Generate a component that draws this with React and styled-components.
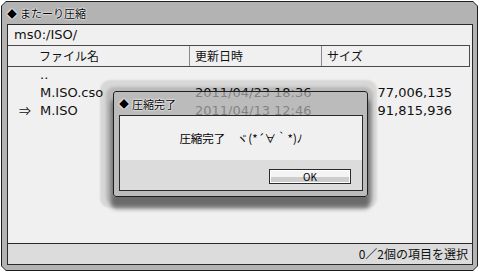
import React from 'react';
import styled, { createGlobalStyle } from 'styled-components';

const GlobalStyle = createGlobalStyle`
	html, body {
		margin: 0;
		padding: 0;
		background: #ffffff;
	}
	body {
		font-family: "DejaVu Sans", "Noto Sans CJK JP", sans-serif;
		color: #111;
	}
`;

const files = [
	{ id: 'up', name: '..', date: '', size: '' },
	{ id: 'cso', name: 'M.ISO.cso', date: '2011/04/23 18:36', size: '77,006,135' },
	{ id: 'iso', name: 'M.ISO', date: '2011/04/13 12:46', size: '91,815,936', current: true },
];

const App = () => {
	return (
		<>
			<GlobalStyle />
			<Screen>
				<FrameEdge>
					<Frame>
						<TitleBar>
							<Diamond>◆</Diamond>またーり圧縮
						</TitleBar>
						<Panel>
							<PathRow>ms0:/ISO/</PathRow>
							<HeaderRow>
								<HeadCell $w={182} $pad={31}>ファイル名</HeadCell>
								<HeadCell $w={132} $pad={5}>更新日時</HeadCell>
								<HeadCell $w={145} $pad={5} $last>サイズ</HeadCell>
							</HeaderRow>
							<List>
								{files.map((f) => (
									<Row key={f.id}>
										<NameCell>
											<Arrow>{f.current ? '⇒' : ''}</Arrow>
											{f.name}
										</NameCell>
										<DateCell>{f.date}</DateCell>
										<SizeCell>{f.size}</SizeCell>
									</Row>
								))}
							</List>
							<StatusBar>0／2個の項目を選択</StatusBar>
						</Panel>
						<Dialog>
							<DialogTitle>
								<Diamond>◆</Diamond>圧縮完了
							</DialogTitle>
							<DialogBox>
								<Message>圧縮完了　ヾ(*´∀｀*)ﾉ</Message>
								<ButtonArea>
									<OkButton>OK</OkButton>
								</ButtonArea>
							</DialogBox>
						</Dialog>
					</Frame>
				</FrameEdge>
			</Screen>
		</>
	);
};

export default App;

const Screen = styled.div`
	width: 480px;
	height: 272px;
	padding: 1px 2px 1px 1px;
	box-sizing: border-box;
	overflow: hidden;
`;

const FrameEdge = styled.div`
	width: 477px;
	height: 270px;
	padding: 1px;
	box-sizing: border-box;
	background: #1e1e1e;
	clip-path: polygon(5px 0, calc(100% - 5px) 0, 100% 5px, 100% calc(100% - 5px), calc(100% - 5px) 100%, 5px 100%, 0 calc(100% - 5px), 0 5px);
`;

const Frame = styled.div`
	position: relative;
	height: 100%;
	box-sizing: border-box;
	display: flex;
	flex-direction: column;
	padding: 0 4px 5px 5px;
	background: #b3b3b3;
	clip-path: polygon(4px 0, calc(100% - 4px) 0, 100% 4px, 100% calc(100% - 4px), calc(100% - 4px) 100%, 4px 100%, 0 calc(100% - 4px), 0 4px);
`;

const TitleBar = styled.div`
	height: 22px;
	display: flex;
	align-items: center;
	font-family: "Noto Sans CJK JP", sans-serif;
	font-size: 11px;
	color: #000;
	text-shadow: 0 0 2px #fff, 0 0 2px #fff, 0 0 1px #fff;
`;

const Diamond = styled.span`
	font-size: 10px;
	margin-right: 3px;
`;

const Panel = styled.div`
	flex: 1;
	display: flex;
	flex-direction: column;
	border: 1px solid #2a2a2a;
	background: #f0f0f0;
	min-height: 0;
`;

const PathRow = styled.div`
	height: 20px;
	line-height: 20px;
	padding-left: 6px;
	font-size: 13px;
`;

const HeaderRow = styled.div`
	display: flex;
	height: 20px;
	margin-right: 2px;
	border-top: 1px solid #4a4a4a;
	border-bottom: 1px solid #4a4a4a;
	border-right: 1px solid #4a4a4a;
`;

const HeadCell = styled.div`
	width: ${(p) => p.$w}px;
	padding-left: ${(p) => p.$pad}px;
	box-sizing: border-box;
	line-height: 20px;
	font-family: "Noto Sans CJK JP", sans-serif;
	font-size: 12px;
	border-right: ${(p) => (p.$last ? 'none' : '1px solid #8a8a8a')};
`;

const List = styled.div`
	flex: 1;
	display: flex;
	flex-direction: column;
	margin-top: -1px;
`;

const Row = styled.div`
	display: flex;
	height: 18px;
	line-height: 18px;
	font-size: 13px;
`;

const NameCell = styled.div`
	width: 182px;
	display: flex;
	padding-left: 11px;
	box-sizing: border-box;
`;

const Arrow = styled.span`
	width: 21px;
	font-family: "Noto Sans CJK JP", sans-serif;
	font-size: 12px;
`;

const DateCell = styled.div`
	width: 132px;
	padding-left: 5px;
	box-sizing: border-box;
	white-space: nowrap;
`;

const SizeCell = styled.div`
	width: 130px;
	text-align: right;
`;

const StatusBar = styled.div`
	height: 20px;
	line-height: 20px;
	border-top: 1px solid #2a2a2a;
	background: #dcdcdc;
	text-align: right;
	padding-right: 4px;
	font-family: "Noto Sans CJK JP", sans-serif;
	font-size: 12px;
`;

/* completion popup, floating over the file list */
const Dialog = styled.div`
	position: absolute;
	left: 111px;
	top: 89px;
	width: 255px;
	height: 106px;
	box-sizing: border-box;
	display: flex;
	flex-direction: column;
	padding: 0 4px 5px 5px;
	border: 1px solid #1e1e1e;
	border-radius: 3px;
	background: rgba(168, 168, 168, 0.74);
	box-shadow:
		-2px 0 2px 11px rgba(0, 0, 0, 0.1),
		-1px 2px 3px 6px rgba(0, 0, 0, 0.14),
		0 10px 4px 2px rgba(0, 0, 0, 0.42);
`;

const DialogTitle = styled.div`
	height: 23px;
	display: flex;
	align-items: center;
	font-family: "Noto Sans CJK JP", sans-serif;
	font-size: 11px;
	color: #000;
	text-shadow: 0 0 2px #fff, 0 0 2px #fff, 0 0 1px #fff;
`;

const DialogBox = styled.div`
	flex: 1;
	display: flex;
	flex-direction: column;
	border: 1px solid #2a2a2a;
	background: #f0f0f0;
`;

const Message = styled.div`
	height: 44px;
	display: flex;
	align-items: center;
	justify-content: center;
	font-family: "Noto Sans CJK JP", sans-serif;
	font-size: 11.5px;
	color: #000;
`;

const ButtonArea = styled.div`
	flex: 1;
	display: flex;
	justify-content: flex-end;
	align-items: flex-start;
	padding: 9px 11px 0 0;
	background: #dcdcdc;
`;

const OkButton = styled.div`
	width: 82px;
	height: 15px;
	box-sizing: border-box;
	border: 1px solid #2a2a2a;
	background: linear-gradient(#f4f4f4 0, #f4f4f4 55%, #cdcdcd 55%, #cdcdcd 100%);
	box-shadow: inset 0 0 0 1px #ffffff;
	font-family: "Noto Sans CJK JP", sans-serif;
	font-size: 10px;
	line-height: 13px;
	text-align: center;
	color: #000;
`;
